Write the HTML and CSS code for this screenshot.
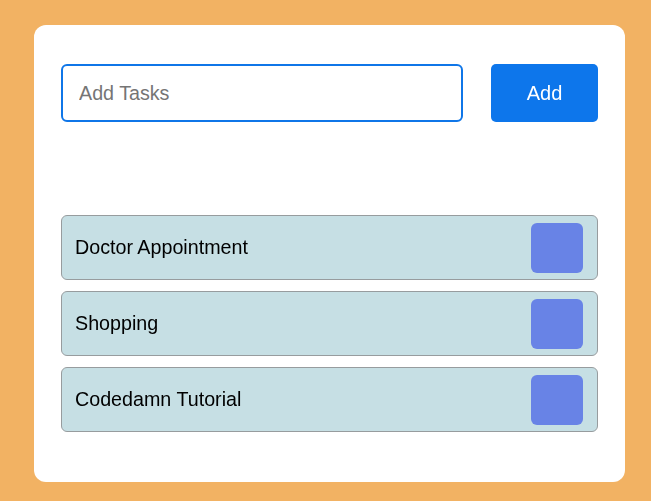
FILE: index.html
```html
<!DOCTYPE html>
<html>
<head>
<meta charset="utf-8">
<link rel="stylesheet" href="styles.css">
</head>
<body>
<div class="card">
  <div class="form">
    <input class="task-input" type="text" placeholder="Add Tasks" autofocus>
    <button class="add-btn">Add</button>
  </div>
  <ul class="list">
    <li class="item"><span class="label">Doctor Appointment</span><span class="check"></span></li>
    <li class="item"><span class="label">Shopping</span><span class="check"></span></li>
    <li class="item"><span class="label">Codedamn Tutorial</span><span class="check"></span></li>
  </ul>
</div>
</body>
</html>
```

FILE: styles.css
```css
* { box-sizing: border-box; }
html, body { margin: 0; padding: 0; }
body {
  background: #f2b263;
  font-family: "Liberation Sans", Arial, sans-serif;
  width: 651px;
  height: 501px;
  overflow: hidden;
  padding: 25px 0 0 34px;
}
.card {
  width: 591px;
  height: 457px;
  background: #fff;
  border-radius: 12px;
  padding: 39px 27px 0 27px;
}
.form {
  display: flex;
  gap: 28px;
}
.task-input {
  width: 402px;
  height: 58px;
  border: 2px solid #0f76e8;
  border-radius: 6px;
  padding: 0 16px;
  font-family: "Liberation Sans", Arial, sans-serif;
  font-size: 19.7px;
  color: #222;
  outline: none;
  caret-color: #333;
}
.task-input::placeholder { color: #757575; }
.add-btn {
  width: 107px;
  height: 58px;
  border: none;
  border-radius: 5px;
  background: #0d76eb;
  color: #fff;
  font-family: "Liberation Sans", Arial, sans-serif;
  font-size: 20px;
  padding: 0;
}
.list {
  list-style: none;
  margin: 93px 0 0 0;
  padding: 0;
  display: flex;
  flex-direction: column;
  gap: 11px;
}
.item {
  height: 65px;
  background: #c6dfe4;
  border: 1px solid #979c9e;
  border-radius: 6px;
  display: flex;
  align-items: center;
  justify-content: space-between;
  padding: 0 14px 0 13px;
}
.label {
  font-size: 19.7px;
  color: #000;
}
.check {
  width: 52px;
  height: 50px;
  background: #6883e6;
  border-radius: 6px;
}
```
